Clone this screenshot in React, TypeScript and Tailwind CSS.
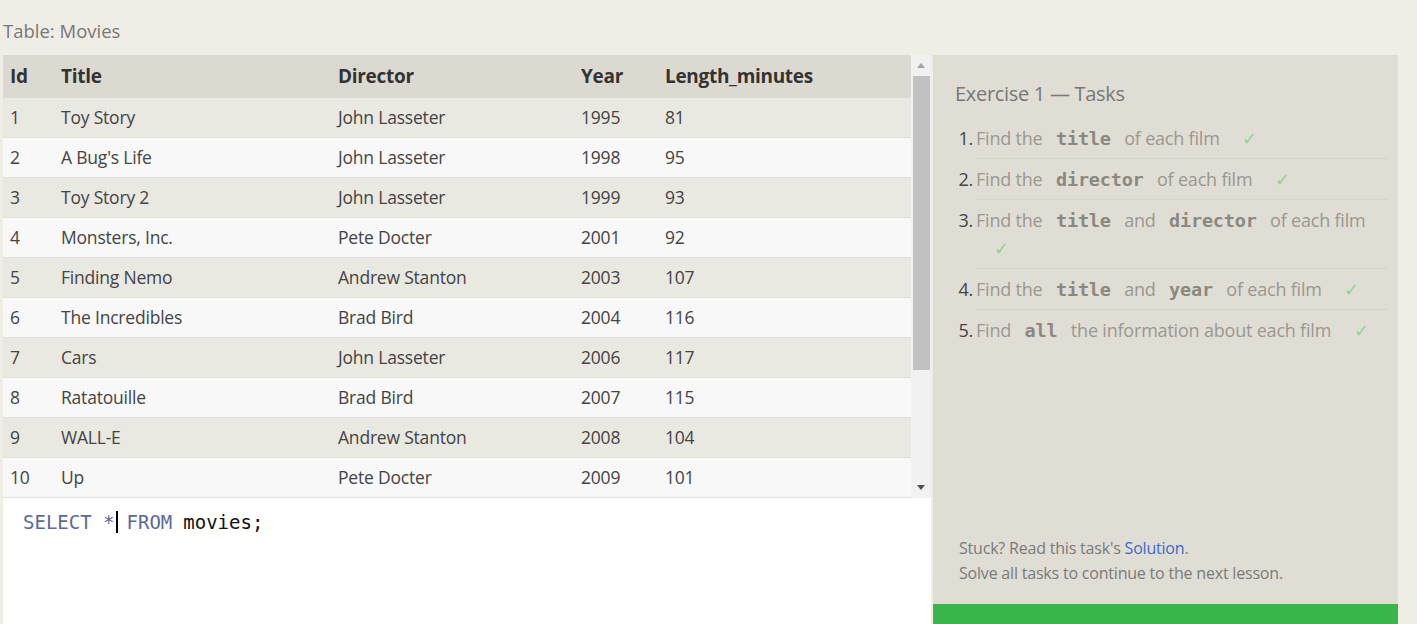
import React from 'react';

const ROWS: [number, string, string, number, number][] = [
  [1, 'Toy Story', 'John Lasseter', 1995, 81],
  [2, "A Bug's Life", 'John Lasseter', 1998, 95],
  [3, 'Toy Story 2', 'John Lasseter', 1999, 93],
  [4, 'Monsters, Inc.', 'Pete Docter', 2001, 92],
  [5, 'Finding Nemo', 'Andrew Stanton', 2003, 107],
  [6, 'The Incredibles', 'Brad Bird', 2004, 116],
  [7, 'Cars', 'John Lasseter', 2006, 117],
  [8, 'Ratatouille', 'Brad Bird', 2007, 115],
  [9, 'WALL-E', 'Andrew Stanton', 2008, 104],
  [10, 'Up', 'Pete Docter', 2009, 101],
];

const SANS = "font-['Open_Sans','Noto_Sans',sans-serif]";
const MONO = "font-['DejaVu_Sans_Mono','Liberation_Mono',monospace]";
const CODE = `${MONO} font-bold text-[#8a887f] text-[18.5px] leading-none mx-[9px]`;
const CHECK = 'text-[#95d195] ml-[18px]';

const Code = ({ children }: { children: React.ReactNode }) => <span className={CODE}>{children}</span>;

const Task = ({ n, children, last }: { n: number; children: React.ReactNode; last?: boolean }) => (
  <li className="flex">
    <span className="text-[#444] w-[20px] shrink-0 pt-[6px] leading-[28px] text-right pr-[2px]">{n}.</span>
    <div className={`flex-1 ml-[1px] text-[#9a9890] leading-[28px] pt-[6px] pb-[6px] pr-[6px] ${last ? '' : 'border-b border-[#d6d4ca]'}`}>
      {children}
    </div>
  </li>
);

export default function App() {
  return (
    <div className={`${SANS} w-[1417px] h-[624px] bg-[#f0ede6] overflow-hidden flex flex-col`}>
      <div className="h-[55px] pl-[3px] pt-[19px] text-[18.5px] text-[#777] leading-[24px]">Table: Movies</div>
      <div className="flex flex-1 min-h-0">
        <div className="ml-[3px] w-[928px] flex flex-col bg-white">
          <div className="flex h-[443px]">
            <div className="flex-1 flex flex-col overflow-hidden">
              <div className="flex h-[43px] shrink-0 items-center bg-[#dcdad0] text-[#333] font-bold text-[19px] tracking-[-0.3px]">
                <div className="w-[58px] pl-[7px]">Id</div>
                <div className="w-[277px]">Title</div>
                <div className="w-[243px]">Director</div>
                <div className="w-[84px]">Year</div>
                <div>Length_minutes</div>
              </div>
              {ROWS.map((r, i) => (
                <div
                  key={r[0]}
                  className={`flex h-[40px] shrink-0 items-center text-[17.5px] text-[#444] tracking-[-0.2px] border-b border-[#e2e0da] ${i % 2 === 0 ? 'bg-[#e9e8e1]' : 'bg-[#f8f8f8]'}`}
                >
                  <div className="w-[58px] pl-[7px]">{r[0]}</div>
                  <div className="w-[277px]">{r[1]}</div>
                  <div className="w-[243px]">{r[2]}</div>
                  <div className="w-[84px]">{r[3]}</div>
                  <div>{r[4]}</div>
                </div>
              ))}
            </div>
            <div className="w-[20px] bg-[#f1f1f1] flex flex-col items-center">
              <div className="h-[21px] flex items-center justify-center">
                <svg width="8" height="5" viewBox="0 0 8 5"><path d="M0 5 L4 0 L8 5 Z" fill="#a3a3a3" /></svg>
              </div>
              <div className="w-[17px] h-[294px] bg-[#c1c1c1]" />
              <div className="flex-1" />
              <div className="h-[21px] flex items-center justify-center">
                <svg width="8" height="5" viewBox="0 0 8 5"><path d="M0 0 L8 0 L4 5 Z" fill="#505050" /></svg>
              </div>
            </div>
          </div>
          <div className={`${MONO} text-[19px] pl-[20px] pt-[11px] leading-[26px] flex items-center`}>
            <span className="text-[#5a6a94]">SELECT *</span>
            <span className="inline-block w-[2px] h-[22px] bg-black mx-[1px]" />
            <span className="text-[#5a6a94] ml-[8px]">FROM</span>
            <span className="text-[#111] ml-[11px]">movies;</span>
          </div>
        </div>
        <div className="ml-[2px] w-[465px] flex flex-col">
          <div className="flex-1 bg-[#e0ded4] pl-[22px] pr-[10px] pt-[26px] flex flex-col">
            <div className="text-[20px] text-[#777] leading-[26px] tracking-[-0.3px]">Exercise 1 — Tasks</div>
            <ol className="mt-[11px] text-[18px] tracking-[-0.2px]">
              <Task n={1}>Find the <Code>title</Code> of each film <span className={CHECK}>✓</span></Task>
              <Task n={2}>Find the <Code>director</Code> of each film <span className={CHECK}>✓</span></Task>
              <Task n={3}>Find the <Code>title</Code> and <Code>director</Code> of each film <span className={CHECK}>✓</span></Task>
              <Task n={4}>Find the <Code>title</Code> and <Code>year</Code> of each film <span className={CHECK}>✓</span></Task>
              <Task n={5} last>Find <Code>all</Code> the information about each film <span className={CHECK}>✓</span></Task>
            </ol>
            <div className="flex-1" />
            <div className="pl-[4px] pb-[18px] text-[16px] text-[#7a7a7a] leading-[25px] tracking-[-0.2px]">
              <div>Stuck? Read this task's <span className="text-[#3b6cc7]">Solution</span>.</div>
              <div>Solve all tasks to continue to the next lesson.</div>
            </div>
          </div>
          <div className="h-[20px] bg-[#3ab54a]" />
        </div>
      </div>
    </div>
  );
}
